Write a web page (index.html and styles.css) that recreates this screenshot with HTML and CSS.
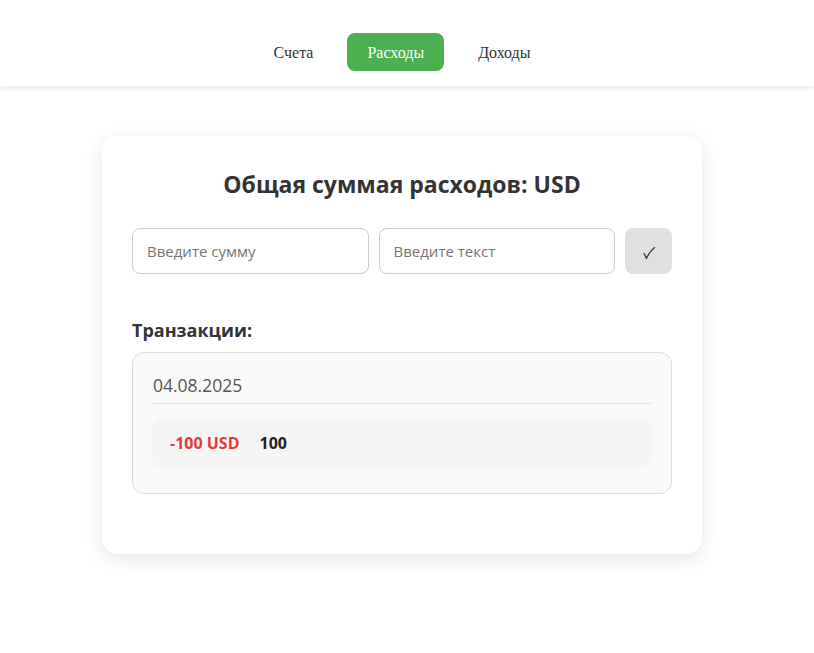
FILE: index.html
```html
<!DOCTYPE html>
<html lang="ru">
<head>
<meta charset="utf-8">
<title>Расходы</title>
<link rel="stylesheet" href="styles.css">
</head>
<body>
<header class="header">
  <nav class="nav">
    <a class="nav-link">Счета</a>
    <a class="nav-link active">Расходы</a>
    <a class="nav-link">Доходы</a>
  </nav>
</header>
<main class="main">
  <section class="card">
    <h2 class="title">Общая суммая расходов: USD</h2>
    <form class="form">
      <input class="field" type="text" placeholder="Введите сумму">
      <input class="field" type="text" placeholder="Введите текст">
      <button class="submit" type="button" aria-label="OK">
        <svg class="check" width="14" height="14" viewBox="0 0 14 14"><path d="M2 7.6 Q3.6 10.2 4.4 12.4 Q7.6 5.6 12.6 1.6" fill="none" stroke="#333" stroke-width="1.3" stroke-linecap="round" stroke-linejoin="round"/></svg>
      </button>
    </form>
    <h3 class="subtitle">Транзакции:</h3>
    <div class="tx-box">
      <div class="tx-date">04.08.2025</div>
      <div class="tx-item">
        <span class="tx-amount">-100 USD</span>
        <span class="tx-text">100</span>
      </div>
    </div>
  </section>
</main>
</body>
</html>
```
FILE: styles.css
```css
* { box-sizing: border-box; }
body {
  margin: 0;
  background: #fff;
  font-family: "Open Sans", "Noto Sans", sans-serif;
  color: #333;
}
.header {
  height: 86px;
  background: #fff;
  box-shadow: 0 2px 5px rgba(0,0,0,0.1);
  padding: 33px 10px 0 0;
}
.nav {
  display: flex;
  justify-content: center;
  gap: 14px;
}
.nav-link {
  font-family: "Liberation Serif", "Times New Roman", serif;
  font-size: 16px;
  line-height: 18px;
  padding: 11px 20px 9px;
  border-radius: 8px;
  color: #333;
}
.nav-link.active {
  background: #4caf50;
  color: #fff;
}
.main {
  display: flex;
  justify-content: center;
  padding: 50px 10px 60px 0;
}
.card {
  width: 600px;
  background: #fff;
  border-radius: 16px;
  box-shadow: 0 5px 20px rgba(0,0,0,0.1);
  padding: 30px 30px 60px;
}
.title {
  margin: 0 0 26px;
  text-align: center;
  font-size: 23px;
  line-height: 36px;
  font-weight: 700;
  color: #333;
}
.form {
  display: flex;
  gap: 10px;
  margin: 0;
}
.field {
  flex: 1;
  min-width: 0;
  height: 46px;
  border: 1px solid #ccc;
  border-radius: 8px;
  padding: 0 14px;
  font-family: inherit;
  font-size: 15px;
  color: #333;
  background: #fff;
}
.field::placeholder { color: #757575; }
.submit {
  width: 47px;
  height: 46px;
  border: none;
  border-radius: 8px;
  background: #e0e0e0;
  padding: 0;
  display: flex;
  align-items: center;
  justify-content: center;
}
.check { display: block; margin-top: 3px; }
.subtitle {
  margin: 44px 0 10px;
  font-size: 18px;
  line-height: 24px;
  font-weight: 700;
  color: #333;
}
.tx-box {
  background: #fafafa;
  border: 1px solid #ddd;
  border-radius: 12px;
  padding: 20px 20px 20px;
}
.tx-date {
  font-size: 17.5px;
  line-height: 24px;
  color: #555;
  padding-bottom: 6px;
  border-bottom: 1px solid #ddd;
  margin-bottom: 16px;
}
.tx-item {
  display: flex;
  gap: 20px;
  align-items: center;
  height: 45px;
  padding: 0 17px;
  background: #f5f5f5;
  border-radius: 10px;
  box-shadow: 0 1px 4px rgba(0,0,0,0.05);
  margin-bottom: 8px;
  font-size: 16px;
  font-weight: 700;
}
.tx-amount { color: #e53935; }
.tx-text { color: #222; }
```
